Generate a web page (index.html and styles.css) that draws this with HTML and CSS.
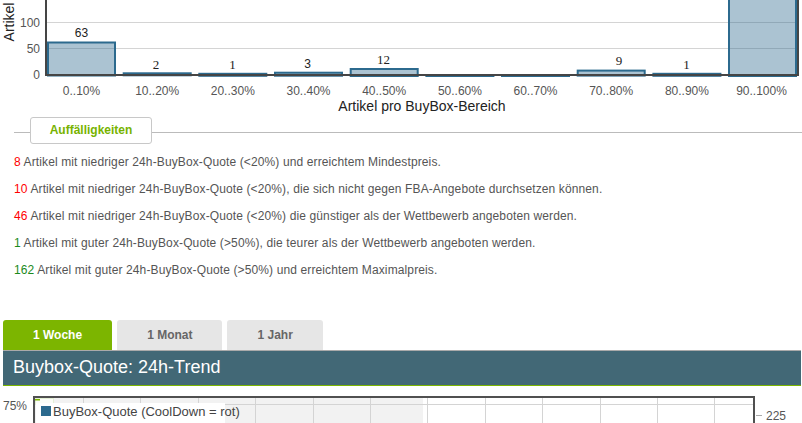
FILE: index.html
```html
<!DOCTYPE html>
<html lang="de">
<head>
    <meta charset="UTF-8">
    <title>BuyBox Übersicht</title>
    <link rel="stylesheet" href="styles.css">
</head>
<body>
    <div class="bars-chart">
        <svg class="bars-svg" width="802" height="114" viewBox="0 0 802 114">
            <text class="axis-title" transform="translate(14 22) rotate(-90)" text-anchor="middle">Artikel</text>
            <rect class="grid-line" x="46" y="22" width="752" height="1"/>
            <rect class="grid-line" x="46" y="48" width="752" height="1"/>
            <text class="tick-label" x="40" y="27" text-anchor="end">100</text>
            <text class="tick-label" x="40" y="53" text-anchor="end">50</text>
            <text class="tick-label" x="40" y="79" text-anchor="end">0</text>

            <rect class="bar" x="48" y="42.5" width="67" height="33"/>
            <rect class="bar" x="123.7" y="73.3" width="67" height="2"/>
            <rect class="bar" x="199.3" y="73.8" width="67" height="2"/>
            <rect class="bar" x="275" y="72.7" width="67" height="3"/>
            <rect class="bar" x="350.7" y="69" width="67" height="7"/>
            <rect class="bar" x="426.4" y="75" width="67" height="1"/>
            <rect class="bar" x="502" y="75" width="67" height="1"/>
            <rect class="bar" x="577.7" y="70.6" width="67" height="5"/>
            <rect class="bar" x="653.4" y="73.8" width="67" height="2"/>
            <rect class="bar" x="729" y="-10" width="67" height="86"/>

            <rect class="axis" x="45" y="0" width="2" height="76"/>
            <rect class="axis" x="797" y="0" width="2" height="76"/>
            <rect class="axis" x="45" y="74" width="754" height="2"/>

            <text class="value-label" x="81.5" y="37.3" text-anchor="middle">63</text>
            <text class="value-label serif" x="156" y="69" text-anchor="middle">2</text>
            <text class="value-label serif" x="232.5" y="69" text-anchor="middle">1</text>
            <text class="value-label" x="307.5" y="68.3" text-anchor="middle">3</text>
            <text class="value-label serif" x="383.5" y="64" text-anchor="middle">12</text>
            <text class="value-label serif" x="619" y="65" text-anchor="middle">9</text>
            <text class="value-label serif" x="686.5" y="69" text-anchor="middle">1</text>

            <text class="cat-label" x="81.5" y="95" text-anchor="middle">0..10%</text>
            <text class="cat-label" x="157.2" y="95" text-anchor="middle">10..20%</text>
            <text class="cat-label" x="232.8" y="95" text-anchor="middle">20..30%</text>
            <text class="cat-label" x="308.5" y="95" text-anchor="middle">30..40%</text>
            <text class="cat-label" x="384.2" y="95" text-anchor="middle">40..50%</text>
            <text class="cat-label" x="459.9" y="95" text-anchor="middle">50..60%</text>
            <text class="cat-label" x="535.5" y="95" text-anchor="middle">60..70%</text>
            <text class="cat-label" x="611.2" y="95" text-anchor="middle">70..80%</text>
            <text class="cat-label" x="686.9" y="95" text-anchor="middle">80..90%</text>
            <text class="cat-label" x="761.5" y="95" text-anchor="middle">90..100%</text>

            <text class="axis-title" x="422" y="111" text-anchor="middle">Artikel pro BuyBox-Bereich</text>
        </svg>
    </div>

    <div class="notes">
        <div class="notes-head">
            <span class="notes-title">Auffälligkeiten</span>
        </div>
        <ul class="notes-list">
            <li><span class="num bad">8</span> Artikel mit niedriger 24h-BuyBox-Quote (&lt;20%) und erreichtem Mindestpreis.</li>
            <li><span class="num bad">10</span> Artikel mit niedriger 24h-BuyBox-Quote (&lt;20%), die sich nicht gegen FBA-Angebote durchsetzen können.</li>
            <li><span class="num bad">46</span> Artikel mit niedriger 24h-BuyBox-Quote (&lt;20%) die günstiger als der Wettbewerb angeboten werden.</li>
            <li><span class="num good">1</span> Artikel mit guter 24h-BuyBox-Quote (&gt;50%), die teurer als der Wettbewerb angeboten werden.</li>
            <li><span class="num good">162</span> Artikel mit guter 24h-BuyBox-Quote (&gt;50%) und erreichtem Maximalpreis.</li>
        </ul>
    </div>

    <div class="trend">
        <div class="tabs">
            <span class="tab active">1 Woche</span>
            <span class="tab">1 Monat</span>
            <span class="tab">1 Jahr</span>
        </div>
        <h2 class="trend-title">Buybox-Quote: 24h-Trend</h2>
        <svg class="trend-svg" width="798" height="37" viewBox="0 0 798 37">
            <text class="tick-label" x="0" y="23.5">75%</text>
            <rect class="plot-shade" x="32" y="12" width="388" height="25"/>
            <rect class="grid-line" x="32" y="18" width="718" height="1"/>
            <rect class="grid-line" x="80" y="12" width="1" height="25"/>
            <rect class="grid-line" x="137" y="12" width="1" height="25"/>
            <rect class="grid-line" x="195" y="12" width="1" height="25"/>
            <rect class="grid-line" x="252" y="12" width="1" height="25"/>
            <rect class="grid-line" x="310" y="12" width="1" height="25"/>
            <rect class="grid-line" x="367" y="12" width="1" height="25"/>
            <rect class="grid-line" x="424" y="12" width="1" height="25"/>
            <rect class="grid-line" x="482" y="12" width="1" height="25"/>
            <rect class="grid-line" x="539" y="12" width="1" height="25"/>
            <rect class="grid-line" x="597" y="12" width="1" height="25"/>
            <rect class="grid-line" x="654" y="12" width="1" height="25"/>
            <rect class="grid-line" x="711" y="12" width="1" height="25"/>
            <rect class="cooldown" x="32.5" y="12.5" width="18" height="6"/>
            <rect class="series-mark" x="32" y="13" width="5" height="1.5"/>
            <rect class="legend-bg" x="33" y="17" width="189" height="20"/>
            <rect class="legend-key" x="38" y="20" width="10" height="10"/>
            <text class="legend-label" x="50" y="29.5">BuyBox-Quote (CoolDown = rot)</text>
            <rect class="frame" x="30" y="10" width="722" height="2"/>
            <rect class="frame" x="30" y="10" width="2" height="27"/>
            <rect class="frame" x="750" y="10" width="2" height="27"/>
            <rect class="tick" x="753" y="29" width="6" height="1"/>
            <text class="tick-label" x="763" y="33.5">225</text>
        </svg>
    </div>
</body>
</html>
```

FILE: styles.css
```css
html, body {
    overflow: hidden;
}
body {
    margin: 0;
    font-family: 'Liberation Sans', Arial, sans-serif;
    background: #fff;
    color: #555;
}
.bars-svg,
.trend-svg {
    display: block;
}
.grid-line {
    fill: #d4d4d4;
}
.axis {
    fill: #454545;
}
.bar {
    fill: rgba(46, 106, 143, 0.4);
    stroke: #2c6a8e;
    stroke-width: 2;
}
.tick-label {
    font-size: 12px;
    fill: #555;
}
.cat-label {
    font-size: 12px;
    fill: #555;
}
.value-label {
    font-size: 12px;
    fill: #222;
}
.value-label.serif {
    font-family: 'Liberation Serif', serif;
    font-size: 13px;
}
.axis-title {
    font-size: 14px;
    fill: #222;
}

/* Auffälligkeiten */
.notes-head {
    display: flex;
    align-items: center;
    height: 27px;
    margin: 3px 0 0 14px;
}
.notes-head::before,
.notes-head::after {
    content: "";
    border-top: 1px solid #bbb;
    margin-top: 3px;
}
.notes-head::before {
    width: 16px;
}
.notes-head::after {
    flex: 1;
}
.notes-title {
    box-sizing: border-box;
    width: 122px;
    height: 27px;
    border: 1px solid #c8c8c8;
    border-radius: 3px;
    text-align: center;
    line-height: 24px;
    font-size: 12px;
    font-weight: bold;
    color: #77b300;
}
.notes-list {
    list-style: none;
    margin: 5px 0 0;
    padding: 0 0 0 14px;
}
.notes-list li {
    line-height: 27px;
    font-size: 12px;
    letter-spacing: 0.12px;
    color: #555;
}
.num.bad {
    color: #f00;
}
.num.good {
    color: #1b8a1b;
}

/* trend */
.trend {
    width: 798px;
    margin: 36px 0 0 3px;
}
.tabs {
    display: flex;
    gap: 5px;
}
.tab {
    height: 30px;
    line-height: 30px;
    padding: 0 30px;
    background: #e6e6e6;
    color: #666;
    font-size: 12px;
    font-weight: bold;
    border-radius: 3px 3px 0 0;
}
.tab.active {
    background: #7cb500;
    color: #fff;
}
.trend-title {
    margin: 0;
    height: 32px;
    line-height: 32px;
    padding: 0 10px 2px;
    border-top: 1px solid #aaa;
    border-bottom: 1px solid #7cb500;
    background: #426876;
    color: #fff;
    font-size: 18px;
    font-weight: normal;
}
.plot-shade {
    fill: #f2f2f2;
}
.cooldown {
    fill: #fbfdf8;
    stroke: #e4efd6;
    stroke-width: 1;
}
.series-mark {
    fill: #7cb500;
}
.legend-bg {
    fill: #fff;
}
.legend-key {
    fill: #2c6a8e;
}
.legend-label {
    font-size: 13px;
    fill: #444;
}
.frame {
    fill: #505050;
}
.tick {
    fill: #aaa;
}
```
